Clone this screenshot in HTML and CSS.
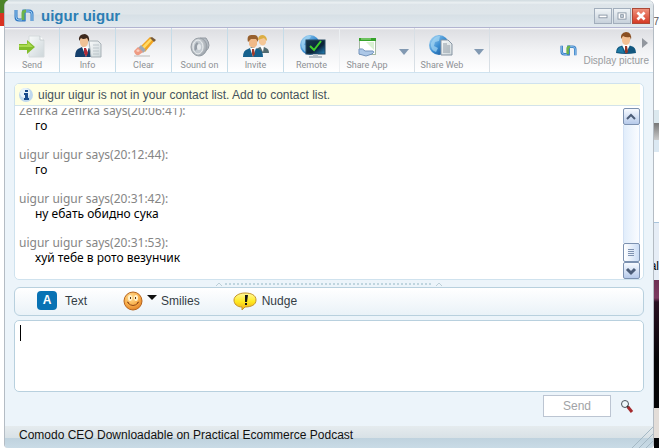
FILE: index.html
```html
<!DOCTYPE html>
<html lang="en">
<head>
  <meta charset="UTF-8">
  <meta name="viewport" content="width=device-width, initial-scale=1.0">
  <title>uigur uigur</title>
  <link rel="stylesheet" href="styles.css">
</head>
<body>
  <svg class="defs" aria-hidden="true">
    <defs>
      <linearGradient id="blue" x1="0" y1="0" x2="1" y2="1"><stop offset="0" stop-color="#b5e0fa"/><stop offset=".5" stop-color="#3b8ed2"/><stop offset="1" stop-color="#11498c"/></linearGradient>
      <linearGradient id="paper" x1="0" y1="0" x2="1" y2="1"><stop offset="0" stop-color="#f8fafa"/><stop offset="1" stop-color="#cdd6da"/></linearGradient>
      <linearGradient id="screen" x1="0" y1="0" x2="1" y2="1"><stop offset="0" stop-color="#18394d"/><stop offset=".6" stop-color="#0b2338"/><stop offset="1" stop-color="#2489c4"/></linearGradient>
      <radialGradient id="face" cx=".4" cy=".3" r=".7"><stop offset="0" stop-color="#ffe09a"/><stop offset=".6" stop-color="#f9b04c"/><stop offset="1" stop-color="#e5852a"/></radialGradient>
      <radialGradient id="metal" cx=".4" cy=".4" r=".7"><stop offset="0" stop-color="#eef1f3"/><stop offset="1" stop-color="#929aa2"/></radialGradient>
      <linearGradient id="bubble" x1="0" y1="0" x2="0" y2="1"><stop offset="0" stop-color="#fff9a0"/><stop offset=".5" stop-color="#ffea20"/><stop offset="1" stop-color="#f0a818"/></linearGradient>
      <symbol id="logo" viewBox="0 0 20 13">
        <path d="M2 1v7q0 3 3 3h5V1" fill="none" stroke="#2f78c4" stroke-width="3"/>
        <path d="M10 12V2h5q3 0 3 3v7" fill="none" stroke="#3b80c8" stroke-width="3"/>
        <path d="M9 11V4q0-2 3-2" fill="none" stroke="#6db54a" stroke-width="3"/>
        <path d="M2 1v7q0 3 3 3h3M12 2h3q3 0 3 3v7" fill="none" stroke="#9ccdf0" stroke-width="1"/>
      </symbol>
      <symbol id="man" viewBox="0 0 20 22">
        <path d="M0 21q0-6 5-7l5-2 5 2q5 1 5 7-10 2-20 0z" fill="#12577f"/>
        <path d="M1 20q1-5 5-5l2 6z" fill="#1d7aa5"/>
        <path d="M6 13l4-2 4 2-4 8z" fill="#fff"/>
        <path d="M9 14h2l1 6-2 2-1-2z" fill="#9a3525"/>
        <path d="M6 4q4-4 8 0v5q-1 4-4 4t-4-4z" fill="#f3c093"/>
        <path d="M5 7q-1-6 5-7 6 0 5 8l-1-3q-4 1-7-1z" fill="#8a4f22"/>
      </symbol>
    </defs>
  </svg>

  <div class="desktop" aria-hidden="true">
    <span class="leaf"></span>
    <span class="flag"></span>
    <span class="seven">7</span>
    <span class="tool"></span>
    <span class="panel"></span>
    <span class="word">al</span>
    <span class="photo"></span>
    <span class="sleeve"></span>
  </div>

  <main class="window">
    <header class="titlebar">
      <svg class="brand"><use href="#logo"/></svg>
      <h1>uigur uigur</h1>
      <div class="controls">
        <button aria-label="Minimize"><svg viewBox="0 0 18 14"><rect x="4.500" y="6" width="9" height="3" fill="#fff" stroke="#8794a3"/></svg></button>
        <button aria-label="Maximize"><svg viewBox="0 0 18 14"><rect x="4.500" y="3.500" width="9" height="7" fill="#fff" stroke="#8794a3"/><rect x="7.500" y="5.500" width="3" height="3" fill="#cdd6df" stroke="#8794a3"/></svg></button>
        <button class="close" aria-label="Close"><svg viewBox="0 0 18 14"><path d="M5 3l8 8M13 3l-8 8" stroke="#fff" stroke-width="3"/></svg></button>
      </div>
    </header>

    <nav class="toolbar">
      <button class="tool-btn">
        <svg viewBox="0 0 28 24"><path d="M11 2h11l4 4v17H11z" fill="url(#paper)" stroke="#d5dbdd"/><path d="M22 2v4h4" fill="#fff" stroke="#c6cdd0"/><path d="M1 10h8V6l8 7-8 7v-4H1z" fill="#82bd2c"/><path d="M1 11h8l1-3 5 5H1z" fill="#a9d950"/></svg>
        Send
      </button>
      <button class="tool-btn">
        <svg viewBox="0 0 28 24"><path d="M1 23q0-8 5-9l4-2 5 2q3 1 3 9z" fill="#153f6c"/><path d="M8 13l3-1 4 1-3 10z" fill="#fff"/><path d="M10 14h2l2 5-2 4-2-4z" fill="#b12b37"/><path d="M6 3h8v6q-1 4-4 4t-4-4z" fill="#efc196"/><path d="M5 7q-1-7 6-7 5 1 4 8l-2-4q-4 2-6 0z" fill="#3c281d"/><path d="M15 7h9l3 3v13H17z" fill="url(#paper)" stroke="#a9b2b7"/><path d="M19 11h6M19 14h6M19 17h6M19 20h6" stroke="#bcc5ca"/></svg>
        Info
      </button>
      <button class="tool-btn">
        <svg viewBox="0 0 28 24"><path d="M4 22h16" stroke="#d8d8d8" stroke-width="2"/><path d="M10 13L20 3l5 3-10 12z" fill="#f1a523"/><path d="M12 13L21 4l2 1-9 10z" fill="#ffdb65"/><path d="M20 4l2-1 4 3-2 2z" fill="#7a5b3a"/><path d="M8 14l3-3 5 5-3 3z" fill="#9fa9b4"/><path d="M4 17l4-4 5 5-4 3q-4 1-5-4z" fill="#ee9b83"/><path d="M6 17l2-2 2 2-2 1z" fill="#fbd0c1"/></svg>
        Clear
      </button>
      <button class="tool-btn">
        <svg viewBox="0 0 28 24"><path d="M14 4h6q6 8 0 13l-6 5z" fill="#b4bbc2" stroke="#9299a1"/><ellipse cx="13" cy="13" rx="8" ry="9" fill="url(#metal)" stroke="#989fa6"/><ellipse cx="12" cy="13" rx="5" ry="7" fill="#c3cad0" stroke="#edf0f2"/><path d="M9 17q-2-5 2-9l3 4z" fill="#949ca5"/><ellipse cx="13" cy="13" rx="2" ry="3" fill="#e5e9ec"/></svg>
        Sound on
      </button>
      <button class="tool-btn">
        <svg viewBox="0 0 28 24"><path d="M14 15l6-3 4 2q3 1 3 5H16z" fill="#536b70"/><path d="M18 12h4l-1 6z" fill="#fff"/><path d="M17 4q3-4 7 0v5q-3 5-7 0z" fill="#f5c797"/><path d="M16 6q0-5 5-5 4 1 4 6l-3-3z" fill="#dcae43"/><path d="M1 23q0-7 5-8l4-2 6 2q5 1 5 8z" fill="#17618d"/><path d="M8 14h6l-3 9z" fill="#fff"/><path d="M10 15h2l1 5-2 3-1-3z" fill="#a03b2b"/><path d="M7 5h8v6q-4 6-8 0z" fill="#f0b988"/><path d="M6 8q-2-8 5-7 6-1 5 7l-2-3H9z" fill="#97602e"/></svg>
        Invite
      </button>
      <button class="tool-btn last">
        <svg viewBox="0 0 28 24"><circle cx="12" cy="11" r="10" fill="url(#blue)"/><path d="M4 7q6-7 9-5-1 4-5 4l-2 5q4 0 4 4l-3 3Q2 13 4 7z" fill="#a5d7f3" opacity=".7"/><rect x="8" y="6" width="19" height="14" fill="url(#screen)" stroke="#274960"/><path d="M12 12l4 4 7-9" fill="none" stroke="#40cc2c" stroke-width="2"/><path d="M15 20h5v2h4v2H11v-2h4z" fill="#b6bfc8"/></svg>
        Remote
      </button>
      <div class="split">
        <button class="tool-btn">
          <svg viewBox="0 0 28 24"><rect x="6.500" y="4.500" width="16" height="16" fill="#fff" stroke="#a6b9a3"/><path d="M6 4h17v3H6z" fill="#36a32b"/><path d="M8 5h10" stroke="#a6e296"/><path d="M13 8h8v8z" fill="#d9f1d2"/><path d="M6 15q4-1 6 2h8q2 1-1 3l-6 2-7-2z" fill="#acc7e7" stroke="#7695bd"/></svg>
          Share App
        </button>
        <button class="drop" aria-label="Share App options"></button>
      </div>
      <div class="split">
        <button class="tool-btn">
          <svg viewBox="0 0 28 24"><circle cx="11" cy="11" r="10" fill="url(#blue)"/><path d="M3 9q4-8 9-7l-1 5-4 1-1 4 4 2-2 4Q2 16 3 9z" fill="#a5d7f3" opacity=".7"/><path d="M13 6h7l4 4v11H13z" fill="url(#paper)" stroke="#8795a3"/><path d="M15 10h4M15 12h7M15 14h7M15 16h7M15 18h7" stroke="#909ba5"/></svg>
          Share Web
        </button>
        <button class="drop" aria-label="Share Web options"></button>
      </div>
      <div class="picture">
        <svg class="mark"><use href="#logo"/></svg>
        <button class="display">
          <span class="portrait"><svg class="avatar"><use href="#man"/></svg><i class="more"></i></span>
          Display picture
        </button>
      </div>
    </nav>

    <section class="chat">
      <p class="notice">
        <svg viewBox="0 0 14 14"><circle cx="7" cy="7" r="7" fill="#bfd8ee"/><circle cx="6" cy="5" r="5" fill="#e6f2fb"/><path d="M6 2h3v2H6zM5 5h4v5h1v2H5v-2h1V7H5z" fill="#174a8d"/></svg>
        <span>uigur uigur is not in your contact list. Add to contact list.</span>
      </p>
      <div class="history">
        <div class="messages">
          <div class="message"><p class="from">Zefirka Zefirka says(20:06:41):</p><p class="text">го</p></div>
          <div class="message"><p class="from">uigur uigur says(20:12:44):</p><p class="text">го</p></div>
          <div class="message"><p class="from">uigur uigur says(20:31:42):</p><p class="text">ну ебать обидно сука</p></div>
          <div class="message"><p class="from">uigur uigur says(20:31:53):</p><p class="text">хуй тебе в рото везунчик</p></div>
        </div>
        <div class="scroll">
          <button aria-label="Scroll up"><svg viewBox="0 0 14 14"><path d="M3 9l4-4 4 4" fill="none" stroke="#4c5d78" stroke-width="2"/></svg></button>
          <div class="track"></div>
          <button class="thumb" aria-label="Scroll position"><svg viewBox="0 0 14 14"><path d="M4 3.500h6M4 5.500h6M4 7.500h6M4 9.500h6" stroke="#7f93b2"/></svg></button>
          <button aria-label="Scroll down"><svg viewBox="0 0 14 14"><path d="M3 5l4 4 4-4" fill="none" stroke="#4c5d78" stroke-width="3"/></svg></button>
        </div>
      </div>
    </section>

    <div class="splitter">
      <svg viewBox="0 0 6 4"><path d="M0 4l3-3 3 3" fill="none" stroke="#bccfd8"/></svg>
      <i></i>
      <svg viewBox="0 0 6 4"><path d="M0 4l3-3 3 3" fill="none" stroke="#bccfd8"/></svg>
    </div>

    <div class="format">
      <button class="fmt"><b class="letter">A</b>Text</button>
      <button class="fmt smilies">
        <svg class="smile" viewBox="0 0 20 20"><circle cx="10" cy="10" r="9" fill="url(#face)" stroke="#b5651f"/><ellipse cx="7" cy="7" rx="2" ry="3" fill="#fff2cd"/><ellipse cx="13" cy="7" rx="2" ry="3" fill="#fff2cd"/><path d="M7.500 6v2M12.500 6v2" stroke="#563516"/><path d="M5 12q5 5 10 0M4 11l2 1M16 11l-2 1" fill="none" stroke="#924816"/></svg>
        <i class="caret-down"></i>Smilies
      </button>
      <button class="fmt nudge">
        <svg class="bubble" viewBox="0 0 24 18"><path d="M12 1c6 0 11 2 11 7s-5 7-11 7l-3 3v-3c-5 0-8-3-8-7s5-7 11-7z" fill="url(#bubble)" stroke="#c59528"/><path d="M12 3h3l-1 7h-2zM12 11h2v2h-2z" fill="#151515"/></svg>
        Nudge
      </button>
    </div>

    <div class="compose">
      <textarea aria-label="Message"></textarea>
      <i class="cursor"></i>
    </div>

    <div class="actions">
      <button class="send">Send</button>
      <button class="search" aria-label="Search"><svg viewBox="0 0 14 14"><circle cx="5" cy="5" r="3.500" fill="#eef7fa" stroke="#4b535b"/><path d="M7 7l2 2" stroke="#333" stroke-width="2"/><path d="M8 8l4 5" stroke="#a52a2d" stroke-width="3"/></svg></button>
    </div>

    <footer class="status">
      <a href="#">Comodo CEO Downloadable on Practical Ecommerce Podcast</a>
      <svg class="grip" viewBox="0 0 22 22"><path d="M1 22L22 1M8 22L22 8M15 22l7-7" stroke="#a5b9c5"/></svg>
    </footer>
  </main>
</body>
</html>
```
FILE: styles.css
```css
*{
  box-sizing: border-box;
}
body,h1,p{
  margin: 0;
}
body{
  height: 100vh;
  min-height: 360px;
  background-color: #fff;
  font-family: "Liberation Sans", Arial, sans-serif;
  font-size: 12px;
  overflow: hidden;
}
button{
  padding: 0;
  border: 0;
  background: none;
  font: inherit;
  color: inherit;
}
svg{
  display: block;
  flex: none;
}
.defs{
  position: absolute;
  width: 0;
  height: 0;
}
/* desktop behind the window */
.desktop span{
  position: absolute;
}
.desktop .leaf{
  top: 0;
  left: 0;
  width: 8px;
  height: 13px;
  background-color: #4c8428;
}
.desktop .flag{
  top: 13px;
  left: 0;
  width: 4px;
  height: 13px;
  background-color: #d83322;
}
.desktop .seven{
  top: 16px;
  right: 0;
  font-size: 10px;
  line-height: 12px;
  color: #555;
}
.desktop .tool{
  top: 110px;
  right: 0;
  width: 5px;
  height: 42px;
  background: linear-gradient(#dbe8ee 13px, #777 13px, #ccc 30px, #dbe8f2 30px);
}
.desktop .panel{
  top: 222px;
  right: 0;
  width: 5px;
  height: 58px;
  border-top: 1px solid #a8c4dc;
  background-color: #e6edf6;
}
.desktop .word{
  top: 259px;
  right: 0;
  font-size: 12px;
  line-height: 14px;
}
.desktop .photo{
  top: 280px;
  right: 0;
  bottom: 0;
  width: 5px;
  background: linear-gradient(#6f3255, #7c3a60 18px, #2a1122 22px, #050507 80px);
}
.desktop .sleeve{
  right: 0;
  bottom: 10px;
  width: 5px;
  height: 30px;
  background-color: #e3ddd8;
}
.window{
  position: relative;
  display: flex;
  flex-direction: column;
  height: 100%;
  margin: 0 5px 0 4px;
  border: solid #b4bcc4;
  border-width: 0 1px;
  border-radius: 6px 6px 4px 4px;
  background-color: #ecf4fa;
  overflow: hidden;
}
.titlebar{
  display: flex;
  align-items: center;
  height: 28px;
  padding: 4px 3px 0 9px;
  border-bottom: 1px solid #b2b4d0;
  background: linear-gradient(#d0dadf, #edf2f4 3px, #dde4e9 4px, #dfe6ea 14px, #d7e0e6 15px, #e1e9ee);
}
.brand{
  width: 20px;
  height: 13px;
}
h1{
  margin-left: 7px;
  font-size: 15px;
  line-height: 20px;
  color: #2c7eb4;
}
.controls{
  display: flex;
  gap: 1px;
  margin-left: auto;
}
.controls button{
  width: 18px;
  height: 16px;
  border: 1px solid #a2aebc;
  background: linear-gradient(#f0f4f7, #c7d1db);
}
.controls svg{
  width: 16px;
  height: 14px;
}
.controls .close{
  border-color: #ac4937;
  background: linear-gradient(#ef927d, #d53a25);
}
.toolbar{
  display: flex;
  height: 45px;
  border-bottom: 1px solid #cfe3f0;
  background: linear-gradient(#fff, #dedfe3 2px, #f1f2f4 22px, #fff 44px);
}
.tool-btn{
  display: flex;
  flex-direction: column;
  align-items: center;
  width: 56px;
  padding-top: 6px;
  border-right: 1px solid #c6dce8;
  font-family: Roboto, sans-serif;
  font-size: 9px;
  line-height: 14px;
  color: #8e9195;
}
.tool-btn:first-child{
  width: 55px;
}
.tool-btn.last{
  border-right-color: #eceff2;
}
.tool-btn svg{
  width: 28px;
  height: 24px;
}
.split{
  display: flex;
  width: 75px;
  border-right: 1px solid #d8dfe5;
}
.split .tool-btn{
  width: 54px;
  border: 0;
}
.drop{
  width: 20px;
}
.drop::before,.more,.caret-down{
  content: "";
  display: block;
  width: 0;
  height: 0;
  border: solid transparent;
}
.drop::before{
  margin: 3px auto 0;
  border-width: 6px 5px 0;
  border-top-color: #8299b2;
}
.picture{
  display: flex;
  align-items: center;
  gap: 6px;
  margin-left: auto;
  padding-right: 4px;
}
.mark{
  width: 17px;
  height: 11px;
}
.display{
  display: flex;
  flex-direction: column;
  align-items: center;
  font-family: "Liberation Sans", Arial, sans-serif;
  font-size: 10px;
  line-height: 14px;
  color: #999ca0;
}
.portrait{
  display: flex;
  align-items: center;
  align-self: flex-end;
  gap: 6px;
  padding-right: 1px;
}
.avatar{
  width: 20px;
  height: 22px;
}
.more{
  border-width: 5px 0 5px 6px;
  border-left-color: #92979e;
}
.chat{
  display: flex;
  flex: 1;
  flex-direction: column;
  min-height: 0;
  margin: 10px 9px 0;
  border: 1px solid #cfe2ee;
  border-radius: 5px;
  background-color: #fff;
  overflow: hidden;
}
.notice{
  display: flex;
  align-items: center;
  gap: 5px;
  height: 22px;
  margin-right: 3px;
  padding-left: 4px;
  border-bottom: 1px solid #d3e3ea;
  background-color: #ffffe3;
  color: #44525c;
}
.notice svg{
  width: 14px;
  height: 14px;
}
.history{
  display: flex;
  flex: 1;
  min-height: 0;
  padding: 2px 3px 0 4px;
}
.messages{
  display: flex;
  flex: 1;
  flex-direction: column;
  justify-content: flex-end;
  gap: 14px;
  padding-bottom: 14px;
  font-family: "Noto Sans", sans-serif;
  font-size: 12px;
  line-height: 15px;
  overflow: hidden;
}
.from{
  color: #858585;
}
.text{
  padding-left: 16px;
  color: #000;
}
.scroll{
  display: flex;
  flex-direction: column;
  width: 17px;
}
.scroll button{
  width: 17px;
  height: 17px;
  border: 1px solid #7c91b0;
  border-radius: 2px;
  background: linear-gradient(#f7faff, #b6caea);
}
.scroll button.thumb{
  height: 19px;
  background: linear-gradient(to right, #fff, #cadcf5);
}
.scroll svg{
  width: 14px;
  height: 14px;
}
.track{
  flex: 1;
  border: solid #d3e1f4;
  border-width: 0 1px;
  background: linear-gradient(to right, #e1edfb, #fafcff);
}
.splitter{
  display: flex;
  align-items: center;
  justify-content: center;
  gap: 3px;
  height: 7px;
}
.splitter svg{
  width: 6px;
  height: 4px;
}
.splitter i{
  width: 208px;
  height: 2px;
  background: repeating-linear-gradient(to right, #bfd5df 0 2px, transparent 2px 4px);
}
.format{
  display: flex;
  align-items: center;
  height: 29px;
  margin: 0 9px;
  padding: 0 22px 2px;
  border: 1px solid #b8d0de;
  border-radius: 6px;
  background: linear-gradient(#fff, #eaf2f8);
}
.fmt{
  display: flex;
  align-items: center;
  color: #343d45;
}
.letter{
  width: 20px;
  margin-right: 8px;
  border-radius: 4px;
  background-color: #0872b4;
  line-height: 19px;
  color: #fff;
}
.smilies{
  margin-left: 36px;
}
.smile{
  width: 20px;
  height: 20px;
}
.caret-down{
  margin: 0 4px 6px;
  border-width: 5px 5px 0;
  border-top-color: #111;
}
.nudge{
  gap: 5px;
  margin-left: 33px;
}
.bubble{
  width: 24px;
  height: 18px;
}
.compose{
  position: relative;
  height: 72px;
  margin: 4px 9px 0;
}
textarea{
  display: block;
  width: 100%;
  height: 100%;
  padding: 4px 5px;
  border: 1px solid #b8d0de;
  border-radius: 5px;
  background-color: #fff;
  font: inherit;
  resize: none;
}
.cursor{
  position: absolute;
  top: 5px;
  left: 6px;
  width: 1px;
  height: 16px;
  background-color: #000;
}
.actions{
  display: flex;
  align-items: center;
  justify-content: flex-end;
  gap: 9px;
  padding: 3px 19px 9px;
}
.send{
  width: 68px;
  height: 22px;
  border: 1px solid #bcc5d2;
  background-color: #fff;
  font-size: 12px;
  color: #a1a3a6;
}
.search svg{
  width: 14px;
  height: 14px;
}
.status{
  position: relative;
  height: 22px;
  padding-left: 14px;
  background: linear-gradient(#e5ebee, #d8e1e6 12px, #bfd2de 12px, #c9dbe6);
  line-height: 18px;
}
.status a{
  color: #111;
  text-decoration: none;
}
.grip{
  position: absolute;
  right: 0;
  bottom: 0;
  width: 22px;
  height: 22px;
}
```
